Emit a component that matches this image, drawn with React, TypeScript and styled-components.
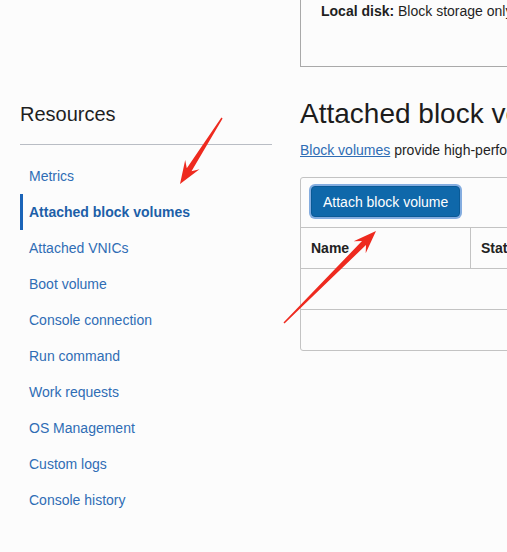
import React from "react";
import styled, { createGlobalStyle } from "styled-components";

const Global = createGlobalStyle`
  html, body { margin: 0; padding: 0; background: #fcfcfc; overflow: hidden; }
  body { font-family: "Liberation Sans", Arial, sans-serif; color: #1f1f1f; }
`;

const Page = styled.div`
  position: relative;
  width: 507px;
  height: 552px;
  overflow: hidden;
  display: flex;
  align-items: flex-start;
  gap: 28px;
  padding-left: 20px;
  box-sizing: border-box;
`;

const Sidebar = styled.aside`
  flex: 0 0 252px;
  padding-top: 102px;
`;

const SideTitle = styled.h2`
  margin: 0;
  font-size: 20px;
  line-height: 24px;
  font-weight: 400;
  color: #1f1f1f;
  padding-bottom: 18px;
  border-bottom: 1px solid #b9bdc4;
`;

const NavList = styled.ul`
  list-style: none;
  margin: 13px 0 0;
  padding: 0;
`;

const NavItem = styled.li<{ $active?: boolean }>`
  height: 36px;
  display: flex;
  align-items: center;
  border-left: 3px solid ${(p) => (p.$active ? "#1b64b8" : "transparent")};
  padding-left: 6px;
  font-size: 14px;
  font-weight: ${(p) => (p.$active ? 700 : 400)};
  color: ${(p) => (p.$active ? "#1d5fa8" : "#2f6db5")};
  white-space: nowrap;
`;

const Main = styled.main`
  flex: 0 0 520px;
`;

const InfoBox = styled.div`
  height: 67px;
  box-sizing: border-box;
  border: 1px solid #a9a9a9;
  border-top: none;
  padding: 2px 20px 0;
  font-size: 14px;
  line-height: 18px;
  white-space: nowrap;
`;

const Strong = styled.b`
  font-weight: 700;
`;

const Heading = styled.h1`
  margin: 30px 0 0;
  font-size: 28px;
  line-height: 34px;
  font-weight: 400;
  white-space: nowrap;
  color: #1c1c1c;
`;

const Desc = styled.p`
  margin: 10px 0 0;
  font-size: 14px;
  line-height: 18px;
  white-space: nowrap;
`;

const Link = styled.a`
  color: #2f6db5;
  text-decoration: underline;
`;

const TableBox = styled.div`
  margin-top: 18px;
  border: 1px solid #c3c3c3;
  border-radius: 3px;
`;

const Toolbar = styled.div`
  padding: 8px 10px 10px;
  display: flex;
`;

const Button = styled.button`
  height: 31px;
  padding: 0 11px;
  background: #0f68aa;
  color: #fff;
  border: 1px solid #0a5a96;
  border-radius: 4px;
  box-shadow: 0 0 0 2px #84ade0;
  font-family: "Liberation Sans", Arial, sans-serif;
  font-size: 14px;
`;

const Row = styled.div`
  display: flex;
  height: 40px;
  border-top: 1px solid #c3c3c3;
`;

const Cell = styled.div<{ $w?: number; $head?: boolean }>`
  flex: ${(p) => (p.$w ? `0 0 ${p.$w}px` : "1")};
  box-sizing: border-box;
  display: flex;
  align-items: center;
  padding-left: 10px;
  font-size: 14px;
  font-weight: ${(p) => (p.$head ? 700 : 400)};
  color: #222;
  border-right: ${(p) => (p.$w ? "1px solid #c3c3c3" : "none")};
`;

const Overlay = styled.svg`
  position: absolute;
  left: 0;
  top: 0;
  pointer-events: none;
`;

function arrowPoints(tx: number, ty: number, hx: number, hy: number) {
  const dx = hx - tx;
  const dy = hy - ty;
  const len = Math.hypot(dx, dy);
  const ux = dx / len;
  const uy = dy / len;
  const nx = -uy;
  const ny = ux;
  const P = (along: number, side: number) =>
    `${(hx - ux * along + nx * side).toFixed(1)},${(hy - uy * along + ny * side).toFixed(1)}`;
  return [
    P(len, 0.7),
    P(17, 2.8),
    P(23, 8.5),
    P(0, 0),
    P(23, -8.5),
    P(17, -2.8),
    P(len, -0.7),
  ].join(" ");
}

const nav = [
  "Metrics",
  "Attached block volumes",
  "Attached VNICs",
  "Boot volume",
  "Console connection",
  "Run command",
  "Work requests",
  "OS Management",
  "Custom logs",
  "Console history",
];

export default function App() {
  return (
    <>
      <Global />
      <Page>
        <Sidebar>
          <SideTitle>Resources</SideTitle>
          <NavList>
            {nav.map((n, i) => (
              <NavItem key={n} $active={i === 1}>
                {n}
              </NavItem>
            ))}
          </NavList>
        </Sidebar>
        <Main>
          <InfoBox>
            <Strong>Local disk:</Strong> Block storage only
          </InfoBox>
          <Heading>Attached block volumes</Heading>
          <Desc>
            <Link>Block volumes</Link> provide high-performance network storage capacity
          </Desc>
          <TableBox>
            <Toolbar>
              <Button>Attach block volume</Button>
            </Toolbar>
            <Row>
              <Cell $w={170} $head>Name</Cell>
              <Cell $head>State</Cell>
            </Row>
            <Row>
              <Cell />
            </Row>
            <Row>
              <Cell />
            </Row>
          </TableBox>
        </Main>
        <Overlay width={507} height={552} viewBox="0 0 507 552">
          <polygon points={arrowPoints(222, 118, 180, 184)} fill="#ee2a1f" />
          <polygon points={arrowPoints(284, 323, 376, 231)} fill="#ee2a1f" />
        </Overlay>
      </Page>
    </>
  );
}
